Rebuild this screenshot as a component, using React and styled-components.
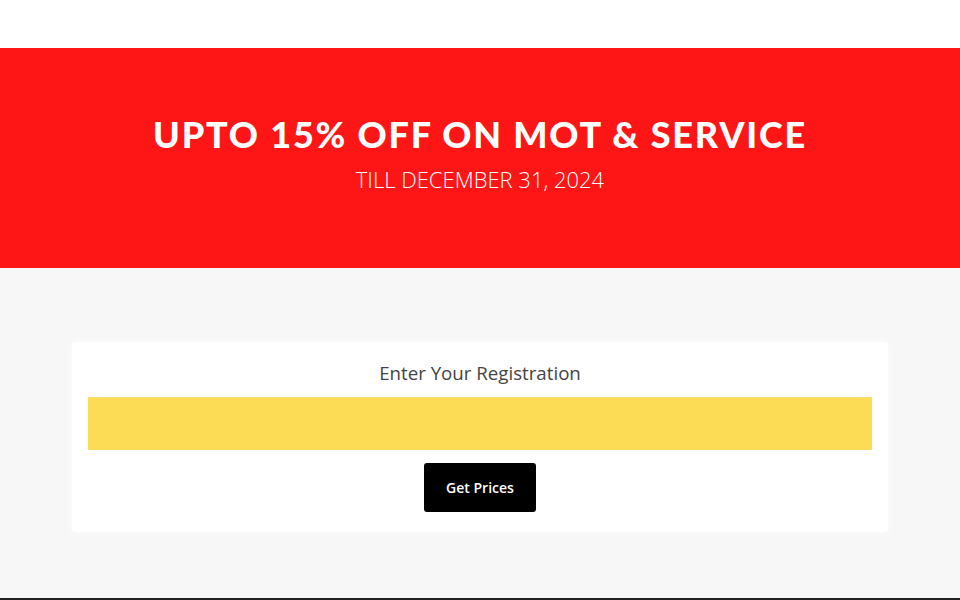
import styled, { createGlobalStyle } from "styled-components";

const GlobalStyle = createGlobalStyle`
    body {
        margin: 0;
        font-family: "Open Sans", "Liberation Sans", sans-serif;
        background: #fff;
    }
`;

export default function App() {
    return (
        <>
            <GlobalStyle />
            <TopBar />
            <Banner>
                <Headline>Upto 15% off on MOT &amp; Service</Headline>
                <Subline>Till December 31, 2024</Subline>
            </Banner>
            <Section>
                <Card>
                    <CardTitle>Enter Your Registration</CardTitle>
                    <RegInput type="text" aria-label="Registration" />
                    <SubmitButton>Get Prices</SubmitButton>
                </Card>
            </Section>
            <Footer />
        </>
    );
}

const TopBar = styled.header`
    height: 48px;
    background: #fff;
`;

const Banner = styled.section`
    height: 220px;
    background: #fe1616;
    display: flex;
    flex-direction: column;
    align-items: center;
    padding-top: 65px;
    box-sizing: border-box;
    color: #fff;
`;

const Headline = styled.h1`
    margin: 0;
    font-family: "Lato", "Liberation Sans", sans-serif;
    font-weight: 900;
    font-size: 36px;
    line-height: 42px;
    letter-spacing: 1.8px;
    text-transform: uppercase;
`;

const Subline = styled.p`
    margin: 10px 0 0;
    font-family: "Open Sans", "Liberation Sans", sans-serif;
    font-weight: 300;
    font-size: 22px;
    line-height: 28px;
    text-transform: uppercase;
`;

const Section = styled.section`
    height: 330px;
    background: #f7f7f7;
    padding: 74px 72px 0;
    box-sizing: border-box;
`;

const Card = styled.div`
    background: #fff;
    border-radius: 4px;
    box-shadow: 0 0 10px rgba(255, 255, 255, 0.9);
    padding: 19px 16px 20px;
    display: flex;
    flex-direction: column;
    align-items: center;
`;

const CardTitle = styled.h3`
    margin: 0 0 12px;
    font-size: 18.7px;
    line-height: 24px;
    font-weight: 500;
    color: #444;
`;

const RegInput = styled.input`
    width: 100%;
    height: 53px;
    box-sizing: border-box;
    border: none;
    border-top: 1px solid #fde070;
    background: #fddc55;
    outline: none;
    margin-bottom: 13px;
`;

const SubmitButton = styled.button`
    width: 112px;
    height: 49px;
    background: #000;
    color: #fff;
    border: none;
    border-radius: 3px;
    font-family: "Open Sans", "Liberation Sans", sans-serif;
    font-weight: 600;
    font-size: 14px;
    cursor: pointer;
`;

const Footer = styled.footer`
    height: 40px;
    background: #222;
`;
